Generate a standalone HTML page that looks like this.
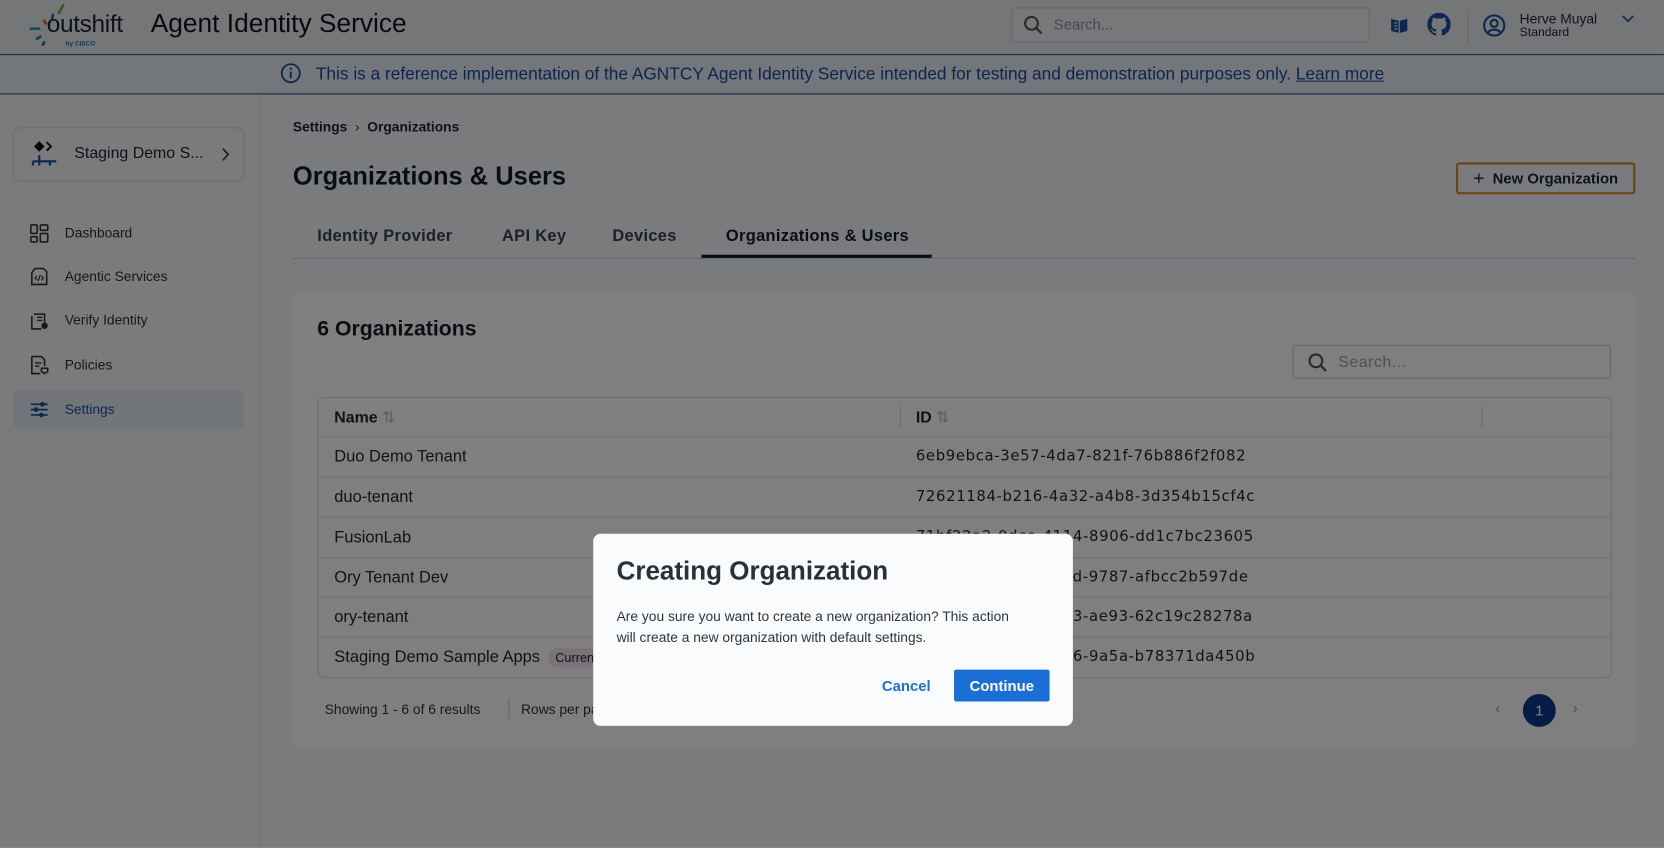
<!DOCTYPE html>
<html><head><meta charset="utf-8"><style>
*{box-sizing:border-box;margin:0;padding:0}
html,body{width:1664px;height:848px;overflow:hidden;background:#fff}
#w{position:absolute;left:0;top:0;width:1568px;height:799px;transform:scale(1.06122);transform-origin:0 0;font-family:"Liberation Sans",sans-serif;color:#1f2430;background:#f4f6f9}
.a{position:absolute}
.hdr{left:0;top:0;width:1568px;height:52px;background:#ebedf0;border-bottom:1.5px solid #1d3f7a}
.ban{left:0;top:52px;width:1568px;height:37px;background:#e6ecf6;border-bottom:1.5px solid #1d3f7a;color:#1b4a9a;font-size:16.3px;text-align:center;line-height:36px}
.side{left:0;top:89px;width:246px;height:710px;background:#f6f7f9;border-right:1px solid #dfe3ea}
.nav{left:12px;width:218px;height:36px;font-size:13px;line-height:36px;padding-left:49px;color:#2a2f3a}
.nav svg{position:absolute;left:16px;top:9px}
.tab{top:214px;font-size:15.5px;font-weight:bold;color:#3a404c;letter-spacing:.3px}
.row{left:300px;width:1218px;height:38px;border-top:1px solid #d9dee8;font-size:15.5px;line-height:37px}
.row span{position:absolute;left:15px}
.row b{position:absolute;left:563px;font-weight:normal;font-family:"DejaVu Sans",sans-serif;font-size:14px;letter-spacing:.6px}
#ov{position:absolute;left:0;top:0;width:1568px;height:799px;background:rgba(0,0,0,.5)}
</style></head><body><div id="w">
<div class="a hdr">
 <svg class="a" style="left:26px;top:3px" width="50" height="44" viewBox="0 0 50 44"><path d="M29 10l5-9" stroke="#6db33f" stroke-width="2.5"/><path d="M23 15l1-5" stroke="#2b6cb0" stroke-width="2.5"/><path d="M15 16l3 4" stroke="#e0582b" stroke-width="2.5"/><path d="M2 24h10" stroke="#1aa0b4" stroke-width="2.5"/><path d="M8 34l5-3M14 40l2-4" stroke="#1b7fa8" stroke-width="2.5"/></svg>
 <div class="a" style="left:44px;top:9px;font-size:23px;color:#1c2230;letter-spacing:-.3px">outshift</div>
 <div class="a" style="left:62px;top:39px;font-size:6px;color:#1b6fb0;font-weight:bold">by CISCO</div>
 <div class="a" style="left:142px;top:9px;font-size:24.8px;color:#0e121a">Agent Identity Service</div>
 <div class="a" style="left:953px;top:7px;width:338px;height:33px;border:1.5px solid #c8d0dc;border-radius:3px;background:#eef0f3"></div>
 <svg class="a" style="left:964px;top:14px" width="20" height="20"><circle cx="8" cy="8" r="6" stroke="#555" stroke-width="2" fill="none"/><path d="M12.5 12.5l5 5" stroke="#555" stroke-width="2.2"/></svg>
 <div class="a" style="left:993px;top:15px;font-size:14px;color:#8a909a">Search...</div>
 <svg class="a" style="left:1309px;top:14px" width="19" height="19" viewBox="0 0 20 20"><path d="M2 4l8 2 8-2v12l-8 2-8-2z" fill="#1d4fa0"/><path d="M10 6v12M5 8h3M5 11h3M5 14h3" stroke="#e6eaf0" stroke-width="1.2"/></svg>
 <svg class="a" style="left:1345px;top:12px" width="22" height="22" viewBox="0 0 16 16"><path fill="#1d4fa0" d="M8 0C3.58 0 0 3.58 0 8c0 3.54 2.290 6.530 5.470 7.590.4.07.55-.17.55-.38v-1.330c-2.230.48-2.700-1.070-2.700-1.070-.36-.92-.89-1.170-.89-1.170-.73-.5.06-.49.06-.49.8.06 1.230.83 1.230.83.71 1.220 1.870.87 2.330.66.07-.52.28-.87.5-1.070-1.780-.2-3.640-.89-3.640-3.950 0-.87.31-1.590.82-2.150-.08-.2-.36-1.020.08-2.120 0 0 .67-.21 2.200.82A7.7 7.7 0 0 1 8 3.860c.68 0 1.360.09 2 .27 1.530-1.040 2.200-.82 2.200-.82.44 1.100.16 1.920.08 2.120.51.56.82 1.270.82 2.150 0 3.070-1.870 3.750-3.650 3.950.29.25.54.73.54 1.480v2.200c0 .21.15.46.55.38A8 8 0 0 0 16 8c0-4.420-3.580-8-8-8z"/></svg>
 <div class="a" style="left:1383px;top:10px;width:1px;height:32px;background:#c9ced6"></div>
 <svg class="a" style="left:1397px;top:13px" width="22" height="22" viewBox="0 0 22 22"><circle cx="11" cy="11" r="9.5" stroke="#1d4fa0" stroke-width="2" fill="none"/><circle cx="11" cy="9" r="3.3" stroke="#1d4fa0" stroke-width="2" fill="none"/><path d="M5.5 17.5c2-3.5 9-3.5 11 0" stroke="#1d4fa0" stroke-width="2" fill="none"/></svg>
 <div class="a" style="left:1432px;top:10px;font-size:13px;color:#1c2230">Herve Muyal</div>
 <div class="a" style="left:1432px;top:25px;font-size:11.5px;color:#1c2230">Standard</div>
 <svg class="a" style="left:1528px;top:14px" width="12" height="8"><path d="M1 1l5 5 5-5" stroke="#1d4fa0" stroke-width="1.6" fill="none"/></svg>
</div>
<div class="a ban"><svg style="vertical-align:-4px;margin-right:14px" width="20" height="20"><circle cx="10" cy="10" r="8.5" stroke="#1b4a9a" stroke-width="1.6" fill="none"/><path d="M10 8.5v6" stroke="#1b4a9a" stroke-width="1.8"/><circle cx="10" cy="5.8" r="1.1" fill="#1b4a9a"/></svg>This is a reference implementation of the AGNTCY Agent Identity Service intended for testing and demonstration purposes only. <u>Learn more</u></div>
<div class="a side"></div>
<div class="a" style="left:12px;top:120px;width:218px;height:51px;border:1px solid #d6dbe4;border-radius:6px;background:#f6f7f9"></div>
<svg class="a" style="left:29px;top:132px" width="26" height="26" viewBox="0 0 26 26"><path d="M8 1l5 5-5 5-5-5z" fill="#111"/><path d="M15 2l4 4-4 4" stroke="#111" stroke-width="1.8" fill="none"/><path d="M2 20h22M8 14v10M18 20v4M2 20v4" stroke="#1d4fa0" stroke-width="2" fill="none"/></svg>
<div class="a" style="left:70px;top:136px;font-size:15px;color:#1c2230">Staging Demo S...</div>
<svg class="a" style="left:208px;top:139px" width="9" height="13"><path d="M2 1l5 5.5-5 5.5" stroke="#333" stroke-width="1.5" fill="none"/></svg>
<div class="a nav" style="top:202px"><svg width="18" height="18"><rect x="1" y="1" width="6" height="8" rx="1" stroke="#333" stroke-width="1.5" fill="none"/><rect x="10" y="1" width="7" height="5" rx="1" stroke="#333" stroke-width="1.5" fill="none"/><rect x="1" y="12" width="6" height="5" rx="1" stroke="#333" stroke-width="1.5" fill="none"/><rect x="10" y="9" width="7" height="8" rx="1" stroke="#333" stroke-width="1.5" fill="none"/></svg>Dashboard</div>
<div class="a nav" style="top:243px"><svg width="18" height="18"><path d="M5 1h8l3 3v12H2V5z" stroke="#333" stroke-width="1.5" fill="none"/><path d="M7 8l-2 2 2 2M11 8l2 2-2 2M10 7l-2 6" stroke="#333" stroke-width="1.1" fill="none"/></svg>Agentic Services</div>
<div class="a nav" style="top:284px"><svg width="18" height="18"><path d="M4 3h10v9M2 5v12h9" stroke="#333" stroke-width="1.5" fill="none"/><path d="M7 6h5M7 9h5" stroke="#333" stroke-width="1.3"/><circle cx="14" cy="14" r="3" fill="#333"/></svg>Verify Identity</div>
<div class="a nav" style="top:326px"><svg width="18" height="18"><path d="M2 1h9l3 3v6M2 1v16h8" stroke="#333" stroke-width="1.5" fill="none"/><path d="M5 7h6M5 10h4" stroke="#333" stroke-width="1.3"/><path d="M11 12h6v3l-3 2-3-2z" stroke="#333" stroke-width="1.4" fill="none"/></svg>Policies</div>
<div class="a nav" style="top:368px;background:#e5eaf2;border-radius:6px;color:#1d4fa0"><svg width="18" height="18"><path d="M1 4h16M1 9h16M1 14h16" stroke="#1d4fa0" stroke-width="1.6"/><circle cx="12" cy="4" r="2.2" fill="#1d4fa0"/><circle cx="6" cy="9" r="2.2" fill="#1d4fa0"/><circle cx="11" cy="14" r="2.2" fill="#1d4fa0"/></svg>Settings</div>

<div class="a" style="left:276px;top:112px;font-size:13px;font-weight:bold;color:#1c2230">Settings &nbsp;<span style="font-weight:normal">›</span>&nbsp; Organizations</div>
<div class="a" style="left:276px;top:153px;font-size:24px;font-weight:bold;color:#151a24">Organizations &amp; Users</div>
<div class="a" style="left:1372px;top:153px;width:169px;height:30px;border:2px solid #d88a1c;border-radius:3px;font-size:14px;font-weight:bold;line-height:26px;text-align:center;color:#1c2230"><span style="font-size:18px;font-weight:normal;vertical-align:-1px">+</span>&nbsp; New Organization</div>
<div class="a tab" style="left:299px">Identity Provider</div>
<div class="a tab" style="left:473px">API Key</div>
<div class="a tab" style="left:577px">Devices</div>
<div class="a tab" style="left:684px;color:#151a24">Organizations &amp; Users</div>
<div class="a" style="left:276px;top:243px;width:1265px;height:1px;background:#c9d0dc"></div>
<div class="a" style="left:661px;top:240px;width:217px;height:3px;background:#151a24"></div>

<div class="a" style="left:276px;top:275px;width:1265px;height:431px;background:#fff;border-radius:8px"></div>
<div class="a" style="left:299px;top:299px;font-size:20px;font-weight:bold;color:#151a24">6 Organizations</div>
<div class="a" style="left:1218px;top:325px;width:300px;height:32px;border:1.5px solid #c5cedb;border-radius:3px"></div>
<svg class="a" style="left:1232px;top:332px" width="20" height="20"><circle cx="8" cy="8" r="6" stroke="#555" stroke-width="2" fill="none"/><path d="M12.5 12.5l5 5" stroke="#555" stroke-width="2.2"/></svg>
<div class="a" style="left:1261px;top:333px;font-size:15px;color:#9aa0aa;letter-spacing:.5px">Search...</div>
<div class="a" style="left:299px;top:374px;width:1220px;height:265px;border:1px solid #d6dce6;border-radius:6px"></div>
<div class="a" style="left:315px;top:384px;font-size:15px;font-weight:bold">Name <span style="color:#bbb;font-weight:normal">⇅</span></div>
<div class="a" style="left:863px;top:384px;font-size:15px;font-weight:bold">ID <span style="color:#bbb;font-weight:normal">⇅</span></div>
<div class="a" style="left:848px;top:382px;width:1px;height:22px;background:#d6dce6"></div>
<div class="a" style="left:1396px;top:382px;width:1px;height:22px;background:#d6dce6"></div>
<div class="a row" style="top:411px"><span>Duo Demo Tenant</span><b>6eb9ebca-3e57-4da7-821f-76b886f2f082</b></div>
<div class="a row" style="top:449px"><span>duo-tenant</span><b>72621184-b216-4a32-a4b8-3d354b15cf4c</b></div>
<div class="a row" style="top:487px"><span>FusionLab</span><b>71bf22a2-0dce-4114-8906-dd1c7bc23605</b></div>
<div class="a row" style="top:525px"><span>Ory Tenant Dev</span><b>4c1e8a31-2f7d-4a6d-9787-afbcc2b597de</b></div>
<div class="a row" style="top:562px"><span>ory-tenant</span><b>e2b1f0c8-9d3a-4b53-ae93-62c19c28278a</b></div>
<div class="a row" style="top:600px"><span>Staging Demo Sample Apps <i style="font-style:normal;font-size:12px;background:#f3e4ee;padding:2px 6px;border-radius:8px;margin-left:4px">Current</i></span><b>1d8c4e2a-5f7b-4b96-9a5a-b78371da450b</b></div>
<div class="a" style="left:306px;top:661px;font-size:13px;color:#333">Showing 1 - 6 of 6 results</div>
<div class="a" style="left:479px;top:658px;width:1px;height:20px;background:#ccc"></div>
<div class="a" style="left:491px;top:661px;font-size:13px;color:#333">Rows per page</div>
<div class="a" style="left:1409px;top:659px;font-size:14px;color:#999">‹</div>
<div class="a" style="left:1435px;top:654px;width:31px;height:31px;border-radius:50%;background:#0a3a8c;color:#fff;font-size:14px;text-align:center;line-height:31px">1</div>
<div class="a" style="left:1482px;top:659px;font-size:14px;color:#999">›</div>

<div id="ov"></div>
<div class="a" style="left:559px;top:503px;width:452px;height:181px;background:#fafbfc;border-radius:7px"></div>
<div class="a" style="left:581px;top:525px;font-size:24.5px;font-weight:bold;color:#2a2f3a">Creating Organization</div>
<div class="a" style="left:581px;top:571px;width:385px;font-size:13px;line-height:19.5px;color:#2f3440">Are you sure you want to create a new organization? This action will create a new organization with default settings.</div>
<div class="a" style="left:831px;top:638px;font-size:14px;font-weight:bold;color:#1a6fd6">Cancel</div>
<div class="a" style="left:899px;top:631px;width:90px;height:30px;background:#1a6fd6;border-radius:2px;color:#fff;font-size:14px;font-weight:bold;text-align:center;line-height:30px">Continue</div>
</div></body></html>
